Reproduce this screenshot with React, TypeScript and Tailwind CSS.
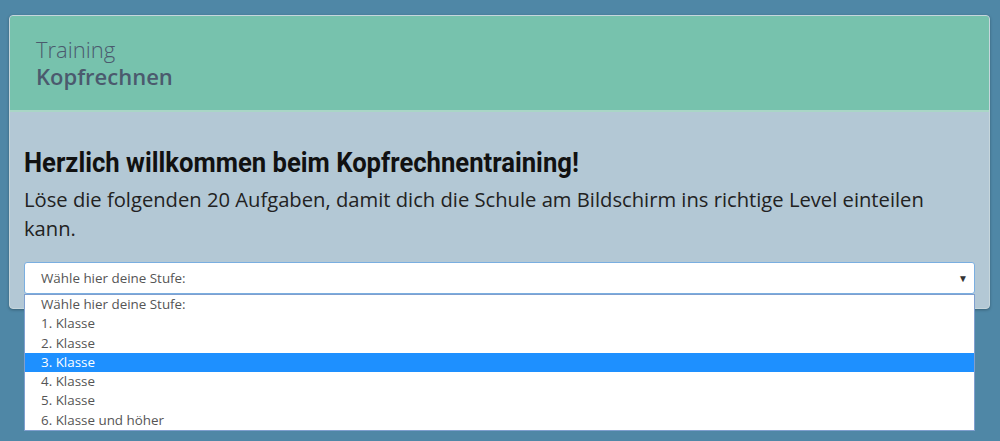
export default function App() {
  const options = [
    "Wähle hier deine Stufe:",
    "1. Klasse",
    "2. Klasse",
    "3. Klasse",
    "4. Klasse",
    "5. Klasse",
    "6. Klasse und höher",
  ];

  return (
    <div className="h-[441px] w-full overflow-hidden bg-[#4f87a6] pt-[15px] pl-[9px] pr-[10px] font-['Open_Sans',sans-serif]">
      <div className="relative rounded-[4px] border border-[#c6d6dc] bg-[#b3c8d5] shadow-[0_1px_3px_rgba(0,0,0,0.3)]">
        <div className="h-[96px] rounded-t-[3px] border-b-2 border-[#a9d6c6] bg-[#77c2ad] pl-[26px] pt-[20px] text-[22px] leading-[27px] text-[#4b5a6e]">
          <div className="font-light">Training</div>
          <div className="font-semibold">Kopfrechnen</div>
        </div>
        <div className="px-[14px] pt-[34px] pb-[14px]">
          <h1 className="font-['Roboto',sans-serif] text-[27px] font-bold leading-[34px] text-[#111]">
            <span className="inline-block origin-left scale-x-[0.95] whitespace-nowrap">
              Herzlich willkommen beim Kopfrechnentraining!
            </span>
          </h1>
          <p className="mt-[5px] pr-[40px] text-[20.2px] leading-[29px] text-[#222]">
            Löse die folgenden 20 Aufgaben, damit dich die Schule am Bildschirm ins richtige Level einteilen kann.
          </p>
          <div className="relative mt-[19px]">
            <div className="flex h-[32px] items-center justify-between rounded-[3px] border border-[#7aaee0] bg-white pl-[16px] pr-[6px] text-[13.4px] text-[#555]">
              <span>Wähle hier deine Stufe:</span>
              <span className="text-[10px] text-[#333]">▼</span>
            </div>
            <ul className="absolute left-0 right-0 top-[32px] border border-[#7f9fcf] bg-white text-[13.4px] text-[#555]">
              {options.map((o) => (
                <li
                  key={o}
                  className={`h-[19.3px] pl-[16px] leading-[19px] ${
                    o === "3. Klasse" ? "bg-[#1e90ff] text-white" : ""
                  }`}
                >
                  {o}
                </li>
              ))}
            </ul>
          </div>
        </div>
      </div>
    </div>
  );
}
